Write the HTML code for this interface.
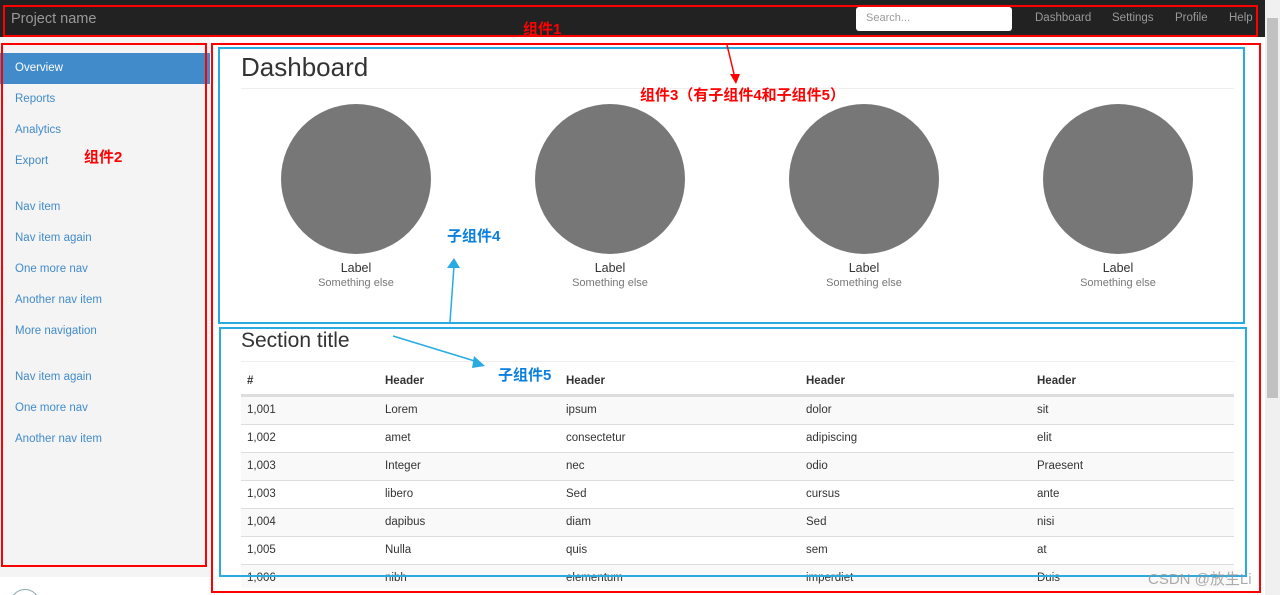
<!DOCTYPE html>
<html style="overflow:hidden;height:595px"><head><meta charset="utf-8"><style>
*{margin:0;padding:0;box-sizing:border-box}
body{width:1280px;height:595px;overflow:hidden;position:relative;background:#fff;font-family:"Liberation Sans",Arial,sans-serif;font-size:12px;color:#333}
.a{position:absolute}
.nav{left:0;top:0;width:1265px;height:37px;background:#222}
.side{left:0;top:37px;width:210px;height:540px;background:#f4f4f4}
.sl{position:absolute;left:15px;color:#428bca;font-size:11.5px}
.box{position:absolute;border:2px solid #f00}
.bbox{position:absolute;border:2px solid #29abe2}
.circ{position:absolute;width:150px;height:150px;border-radius:50%;background:#777;top:104px}
.lab{position:absolute;width:150px;text-align:center;font-size:12.5px;top:261px}
.sub{position:absolute;width:150px;text-align:center;font-size:11px;color:#777;top:277px}
.row{position:absolute;left:241px;width:993px;height:28px;border-top:1px solid #ddd}
.row span{position:absolute;top:7px;font-size:11.5px}
.red{position:absolute;color:#f00;font-weight:bold;font-size:15px;font-family:"Liberation Sans","Noto Sans CJK SC",sans-serif}
.blu{position:absolute;color:#0a7fe0;font-weight:bold;font-size:15px;font-family:"Liberation Sans","Noto Sans CJK SC",sans-serif}
</style></head><body>
<div class="a nav"></div>
<div class="a" style="left:11px;top:11px;color:#999;font-size:14.5px">Project name</div>
<div class="a" style="left:856px;top:7px;width:156px;height:24px;background:#fff;border-radius:3px"></div>
<div class="a" style="left:866px;top:12px;color:#999;font-size:11px">Search...</div>
<div class="a" style="left:1035px;top:12px;color:#999;font-size:11.5px">Dashboard</div>
<div class="a" style="left:1112px;top:12px;color:#999;font-size:11.5px">Settings</div>
<div class="a" style="left:1175px;top:12px;color:#999;font-size:11.5px">Profile</div>
<div class="a" style="left:1229px;top:12px;color:#999;font-size:11.5px">Help</div>
<div class="a" style="left:1265px;top:0;width:15px;height:595px;background:#f0f0f0"></div>
<div class="a" style="left:1267px;top:18px;width:11px;height:380px;background:#c1c1c1"></div>

<div class="a side"></div>
<div class="a" style="left:0;top:53px;width:210px;height:31px;background:#428bca"></div>
<div class="sl" style="top:62px;color:#fff">Overview</div>
<div class="sl" style="top:93px">Reports</div>
<div class="sl" style="top:124px">Analytics</div>
<div class="sl" style="top:155px">Export</div>
<div class="sl" style="top:201px">Nav item</div>
<div class="sl" style="top:232px">Nav item again</div>
<div class="sl" style="top:263px">One more nav</div>
<div class="sl" style="top:294px">Another nav item</div>
<div class="sl" style="top:325px">More navigation</div>
<div class="sl" style="top:371px">Nav item again</div>
<div class="sl" style="top:402px">One more nav</div>
<div class="sl" style="top:433px">Another nav item</div>
<div class="a" style="left:10px;top:589px;width:30px;height:6px;overflow:hidden"><div style="width:30px;height:30px;border-radius:50%;border:1px solid #8aa"></div></div>

<div class="a" style="left:241px;top:52px;font-size:26px;color:#333">Dashboard</div>
<div class="a" style="left:241px;top:88px;width:993px;height:1px;background:#eee"></div>
<div class="circ" style="left:281px"></div><div class="lab" style="left:281px">Label</div><div class="sub" style="left:281px">Something else</div>
<div class="circ" style="left:535px"></div><div class="lab" style="left:535px">Label</div><div class="sub" style="left:535px">Something else</div>
<div class="circ" style="left:789px"></div><div class="lab" style="left:789px">Label</div><div class="sub" style="left:789px">Something else</div>
<div class="circ" style="left:1043px"></div><div class="lab" style="left:1043px">Label</div><div class="sub" style="left:1043px">Something else</div>

<div class="a" style="left:241px;top:329px;font-size:21px;color:#333">Section title</div>
<div class="a" style="left:241px;top:361px;width:993px;height:1px;background:#eee"></div>
<div class="row" style="top:368px;border-top:none;border-bottom:2px solid #ddd;height:28px;font-weight:bold"><span style="left:6px">#</span><span style="left:144px">Header</span><span style="left:325px">Header</span><span style="left:565px">Header</span><span style="left:796px">Header</span></div>
<div class="row" style="top:396px;background:#f9f9f9"><span style="left:6px">1,001</span><span style="left:144px">Lorem</span><span style="left:325px">ipsum</span><span style="left:565px">dolor</span><span style="left:796px">sit</span></div>
<div class="row" style="top:424px"><span style="left:6px">1,002</span><span style="left:144px">amet</span><span style="left:325px">consectetur</span><span style="left:565px">adipiscing</span><span style="left:796px">elit</span></div>
<div class="row" style="top:452px;background:#f9f9f9"><span style="left:6px">1,003</span><span style="left:144px">Integer</span><span style="left:325px">nec</span><span style="left:565px">odio</span><span style="left:796px">Praesent</span></div>
<div class="row" style="top:480px"><span style="left:6px">1,003</span><span style="left:144px">libero</span><span style="left:325px">Sed</span><span style="left:565px">cursus</span><span style="left:796px">ante</span></div>
<div class="row" style="top:508px;background:#f9f9f9"><span style="left:6px">1,004</span><span style="left:144px">dapibus</span><span style="left:325px">diam</span><span style="left:565px">Sed</span><span style="left:796px">nisi</span></div>
<div class="row" style="top:536px"><span style="left:6px">1,005</span><span style="left:144px">Nulla</span><span style="left:325px">quis</span><span style="left:565px">sem</span><span style="left:796px">at</span></div>
<div class="row" style="top:564px;background:#f9f9f9;height:24px;overflow:hidden"><span style="left:6px">1,006</span><span style="left:144px">nibh</span><span style="left:325px">elementum</span><span style="left:565px">imperdiet</span><span style="left:796px">Duis</span></div>

<div class="box" style="left:3px;top:5px;width:1255px;height:32px"></div>
<div class="box" style="left:1px;top:43px;width:206px;height:524px"></div>
<div class="box" style="left:211px;top:43px;width:1050px;height:550px"></div>
<div class="bbox" style="left:218px;top:47px;width:1027px;height:277px"></div>
<div class="bbox" style="left:219px;top:327px;width:1028px;height:250px"></div>

<div class="red" style="left:523px;top:18px">组件1</div>
<div class="red" style="left:84px;top:146px">组件2</div>
<div class="red" style="left:640px;top:84px">组件3（有子组件4和子组件5）</div>
<div class="blu" style="left:447px;top:225px">子组件4</div>
<div class="blu" style="left:498px;top:364px">子组件5</div>
<svg class="a" style="left:0;top:0" width="1280" height="595">
<line x1="727" y1="45" x2="735" y2="78" stroke="#f00" stroke-width="1.5"/><polygon points="730,74 740,74 736,84" fill="#f00"/>
<line x1="450" y1="322" x2="454" y2="266" stroke="#29abe2" stroke-width="1.5"/><polygon points="447,268 460,268 454,258" fill="#29abe2"/>
<line x1="393" y1="336" x2="478" y2="362" stroke="#29abe2" stroke-width="1.5"/><polygon points="474,356 485,366 472,368" fill="#29abe2"/>
</svg>
<div class="a" style="left:1148px;top:568px;color:rgba(150,150,150,.8);font-size:15px;font-family:'Liberation Sans','Noto Sans CJK SC',sans-serif">CSDN @放生Li</div>
</body></html>
